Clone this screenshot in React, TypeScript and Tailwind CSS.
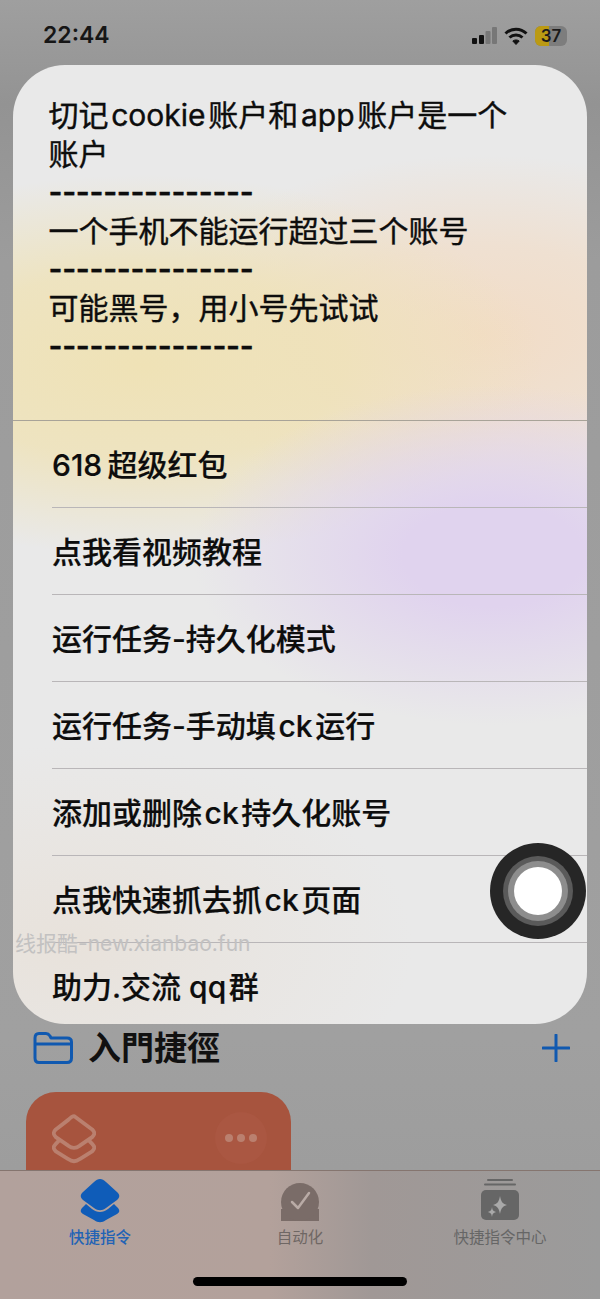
import React from 'react';

const menuItems = [
  '618\u2009超级红包',
  '点我看视频教程',
  '运行任务-持久化模式',
  '运行任务-手动填\u200Ack\u200A运行',
  '添加或删除\u200Ack\u200A持久化账号',
  '点我快速抓去抓\u200Ack\u200A页面',
  '助力.交流 qq\u200A群',
];

const noteLines = [
  '切记\u200Acookie\u200A账户和\u200Aapp\u200A账户是一个账户',
  '---------------',
  '一个手机不能运行超过三个账号',
  '---------------',
  '可能黑号，用小号先试试',
  '---------------',
];

function StatusBar() {
  return (
    <div className="h-[65px] shrink-0 flex items-start justify-between pl-[43px] pr-[33px] pt-[21px]">
      <span className="text-[23px] leading-[29px] font-semibold text-[#161616]">22:44</span>
      <div className="flex items-center gap-[6px] pt-[5px]">
        <svg width="25" height="18" viewBox="0 0 25 18">
          <rect x="0" y="11" width="5" height="6" rx="1" fill="#111" />
          <rect x="7" y="8" width="5" height="9" rx="1" fill="#111" />
          <rect x="13.5" y="4" width="5" height="13" rx="1" fill="#777" />
          <rect x="20" y="0" width="5" height="17" rx="1" fill="#777" />
        </svg>
        <svg width="24" height="18" viewBox="0 0 24 18" fill="none" stroke="#111" strokeWidth="3" className="ml-[1px]">
          <path d="M1.5 6.5C7.5 .8 16.500 .8 22.500 6.5" />
          <path d="M5.500 10.500C9.200 7.200 14.800 7.200 18.500 10.500" />
          <path d="M12 17.500 8.800 14C10.800 12.600 13.200 12.600 15.200 14Z" fill="#111" strokeWidth="1" />
        </svg>
        <div className="relative ml-[1px] w-[32px] h-[20px] rounded-[6px] bg-[#7d7d7d] overflow-hidden flex items-center justify-center">
          <div className="absolute left-0 top-0 bottom-0 w-[14px] bg-[#bb9a13]" />
          <span className="relative text-[17px] leading-[20px] font-semibold text-[#1b1b1b]">37</span>
        </div>
      </div>
    </div>
  );
}

function ActionSheet() {
  return (
    <div className="mx-[13px] h-[959px] shrink-0 rounded-[52px] overflow-hidden text-[30px] text-[#0d0d0d] flex flex-col bg-[#e9e9e9] bg-[radial-gradient(ellipse_300px_170px_at_480px_490px,#e0d3ee_0%,#e0d3ee_30%,transparent_100%),radial-gradient(ellipse_400px_190px_at_130px_300px,#efe2b6_0%,#efe2b6cc_50%,transparent_100%),radial-gradient(ellipse_340px_180px_at_470px_270px,#f2dcc6_0%,#f2dcc6aa_50%,transparent_100%),radial-gradient(ellipse_340px_200px_at_60px_880px,#e8e2db_0%,transparent_100%)]">
      <div className="h-[355px] shrink-0 pt-[31px] pl-[35.500px] pr-[60px] leading-[38.500px] font-normal [-webkit-text-stroke:0.4px_#0d0d0d]">
        {noteLines.map((line, i) => (
          <div key={i} className={line.startsWith('-') ? 'font-semibold tracking-[-0.300px]' : ''}>{line}</div>
        ))}
      </div>
      {menuItems.map((item, i) => (
        <div key={item} className="h-[87px] shrink-0 pl-[39px]">
          <div className={`h-full flex items-center pt-[2px] font-medium [-webkit-text-stroke:0.2px_#0d0d0d] ${i === 0 ? 'border-t border-[#a8a398] -ml-[39px] pl-[39px]' : 'border-t border-[#b9b6b8]'}`}>
            {item}
          </div>
        </div>
      ))}
    </div>
  );
}

function ShortcutCard() {
  return (
    <div className="ml-[26px] mt-[26px] w-[265px] h-[80px] shrink-0 rounded-t-[30px] bg-[#a7543e] flex items-start justify-between pl-[26px] pr-[24px] pt-[22px]">
      <svg width="44" height="50" viewBox="0 0 46 52" fill="none" stroke="#ba806f" strokeWidth="4" strokeLinejoin="round">
        <path d="M23 2 42 16C45 19 45 21 42 24L29 33C25 36 21 36 17 33L4 24C1 21 1 19 4 16L17 6C20 3 22 2 23 2Z" />
        <path d="M8 27 4 31C1 34 1 36 4 39L17 47C21 50 25 50 29 47L42 39C45 36 45 34 42 31L38 27" />
      </svg>
      <div className="w-[52px] h-[52px] -mt-[2px] rounded-full bg-[#aa5742] flex items-center justify-center gap-[4px]">
        <span className="w-[8px] h-[8px] rounded-full bg-[#ba806f]" />
        <span className="w-[8px] h-[8px] rounded-full bg-[#ba806f]" />
        <span className="w-[8px] h-[8px] rounded-full bg-[#ba806f]" />
      </div>
    </div>
  );
}

function TabBar() {
  return (
    <div className="absolute left-0 right-0 bottom-0 h-[129px] border-t border-[#85756f] bg-[linear-gradient(90deg,#b2a19c_0%,#b3a19b_45%,#a09896_62%,#9b9b9b_100%)]">
      <div className="grid grid-cols-3 pt-[8px]">
        <div className="flex flex-col items-center">
          <svg width="40" height="44" viewBox="0 0 40 44" fill="#0f5cb8">
            <path d="M20 0C22 0 24 1 26 3L37 13C40 16 40 18 37 21L26 29C22 32 18 32 14 29L3 21C0 18 0 16 3 13L14 3C16 1 18 0 20 0Z" />
            <path d="M6 25 12 30C17 34 23 34 28 30L34 25 37 28C40 31 40 33 37 35L26 41C22 44 18 44 14 41L3 35C0 33 0 31 3 28Z" />
          </svg>
          <span className="mt-[5px] text-[15.500px] leading-[20px] font-medium text-[#2263b5]">快捷指令</span>
        </div>
        <div className="flex flex-col items-center">
          <svg width="40" height="44" viewBox="0 0 40 44">
            <path d="M1 30H39V42H1Z" fill="#7a6c68" />
            <circle cx="20" cy="23" r="19" fill="#7a6c68" />
            <path d="M12 23 18 29 29 14" fill="none" stroke="#b9aba6" strokeWidth="2.500" strokeLinecap="round" strokeLinejoin="round" />
          </svg>
          <span className="mt-[5px] text-[15.500px] leading-[20px] text-[#6f6764]">自动化</span>
        </div>
        <div className="flex flex-col items-center">
          <svg width="40" height="44" viewBox="0 0 40 44" fill="#666">
            <rect x="7" y="0" width="26" height="2" rx="1" />
            <rect x="4" y="4.500" width="32" height="2" rx="1" />
            <rect x="1" y="11" width="38" height="30" rx="5" />
            <path d="M20 17C21 23 23 25 27 26 23 27 21 29 20 35 19 29 17 27 13 26 17 25 19 23 20 17Z" fill="#a9a9a9" />
            <path d="M12 28C12.500 31 13 32 16 33 13 34 12.500 35 12 38 11.500 35 11 34 8 33 11 32 11.500 31 12 28Z" fill="#a9a9a9" />
          </svg>
          <span className="mt-[5px] text-[15.500px] leading-[20px] text-[#666]">快捷指令中心</span>
        </div>
      </div>
      <div className="absolute left-[193px] top-[106px] w-[214px] h-[9px] rounded-full bg-black" />
    </div>
  );
}

export default function App() {
  return (
    <div className="relative w-[600px] h-[1299px] overflow-hidden flex flex-col bg-[linear-gradient(180deg,#9f9f9f_0%,#939393_8%,#9c9c9c_20%,#a0a0a0_80%,#9a9a9a_100%)] font-['Inter','Noto_Sans_CJK_SC',sans-serif]">
      <StatusBar />
      <ActionSheet />

      <div className="mt-[6px] h-[36px] shrink-0 flex items-center pl-[33px] pr-[30px]">
        <svg width="40" height="32" viewBox="0 0 40 32" fill="none" stroke="#1059b0" strokeWidth="3" strokeLinejoin="round">
          <path d="M2 6C2 3 3.500 1.500 6 1.500H13C15 1.500 16 2.500 17 4L18 6H34C37 6 38.500 7.500 38.500 10V26C38.500 29 37 30.500 34 30.500H6C3.500 30.500 2 29 2 26Z" />
          <path d="M2 12H38.500" />
        </svg>
        <span className="ml-[15px] text-[33px] leading-[36px] font-bold text-[#111]">入門捷徑</span>
        <svg width="28" height="28" viewBox="0 0 28 28" stroke="#1059b0" strokeWidth="3" strokeLinecap="round" className="ml-auto">
          <path d="M14 1V27M1 14H27" />
        </svg>
      </div>

      <ShortcutCard />
      <TabBar />

      {/* watermark sits on top of the sheet */}
      <span className="absolute left-[15px] top-[932px] text-[21px] leading-[24px] text-[#c2c1c1]">线报酷-new.xianbao.fun</span>

      {/* assistive touch */}
      <div className="absolute left-[490px] top-[843px] w-[96px] h-[96px] rounded-full bg-[#262626] flex items-center justify-center">
        <div className="w-[70px] h-[70px] rounded-full bg-[#5a5a5a] flex items-center justify-center">
          <div className="w-[60px] h-[60px] rounded-full bg-[#8d8d8d] flex items-center justify-center">
            <div className="w-[48px] h-[48px] rounded-full bg-white" />
          </div>
        </div>
      </div>
    </div>
  );
}
